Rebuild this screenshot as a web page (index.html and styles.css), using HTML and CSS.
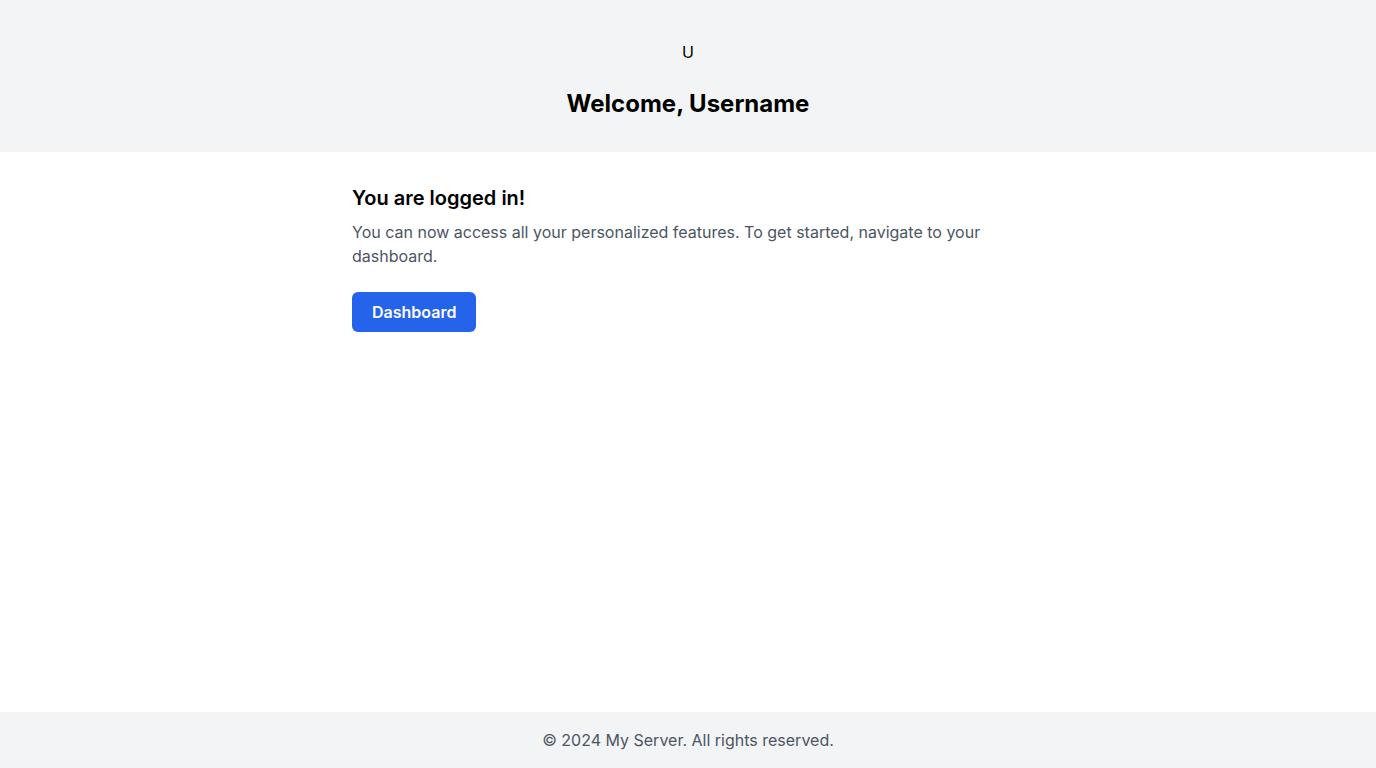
FILE: index.html
```html
<!DOCTYPE html>
<html lang="en">
<head>
<meta charset="utf-8">
<title>Welcome</title>
<link rel="stylesheet" href="styles.css">
</head>
<body>
<header class="hero">
  <div class="avatar">U</div>
  <h1 class="welcome">Welcome, Username</h1>
</header>
<main class="main">
  <div class="container">
    <h2 class="title">You are logged in!</h2>
    <p class="lead">You can now access all your personalized features. To get started, navigate to your dashboard.</p>
    <a class="btn" href="#">Dashboard</a>
  </div>
</main>
<footer class="footer">© 2024 My Server. All rights reserved.</footer>
</body>
</html>
```
FILE: styles.css
```css
* { box-sizing: border-box; }
html, body { margin: 0; padding: 0; }
body {
  font-family: Inter, "Noto Sans", sans-serif;
  color: #000;
  background: #fff;
  min-height: 100vh;
  display: flex;
  flex-direction: column;
  font-size: 16px;
  line-height: 24px;
}
.hero {
  background: #f3f4f6;
  padding: 32px 16px;
  display: flex;
  flex-direction: column;
  align-items: center;
}
.avatar {
  width: 40px;
  height: 40px;
  display: flex;
  align-items: center;
  justify-content: center;
  font-size: 16px;
  line-height: 24px;
  color: #000;
  margin-bottom: 16px;
}
.welcome {
  margin: 0;
  font-size: 24px;
  line-height: 32px;
  font-weight: 700;
}
.main {
  flex: 1;
  padding: 32px 16px;
}
.container {
  max-width: 672px;
  margin: 0 auto;
}
.title {
  margin: 0 0 8px;
  font-size: 20px;
  line-height: 28px;
  font-weight: 600;
}
.lead {
  margin: 0 0 24px;
  color: #4b5563;
}
.btn {
  display: inline-block;
  background: #2563eb;
  color: #fff;
  font-weight: 600;
  text-decoration: none;
  padding: 8px 20px;
  border-radius: 6px;
}
.footer {
  background: #f3f4f6;
  color: #4b5563;
  text-align: center;
  padding: 16px;
}
```
